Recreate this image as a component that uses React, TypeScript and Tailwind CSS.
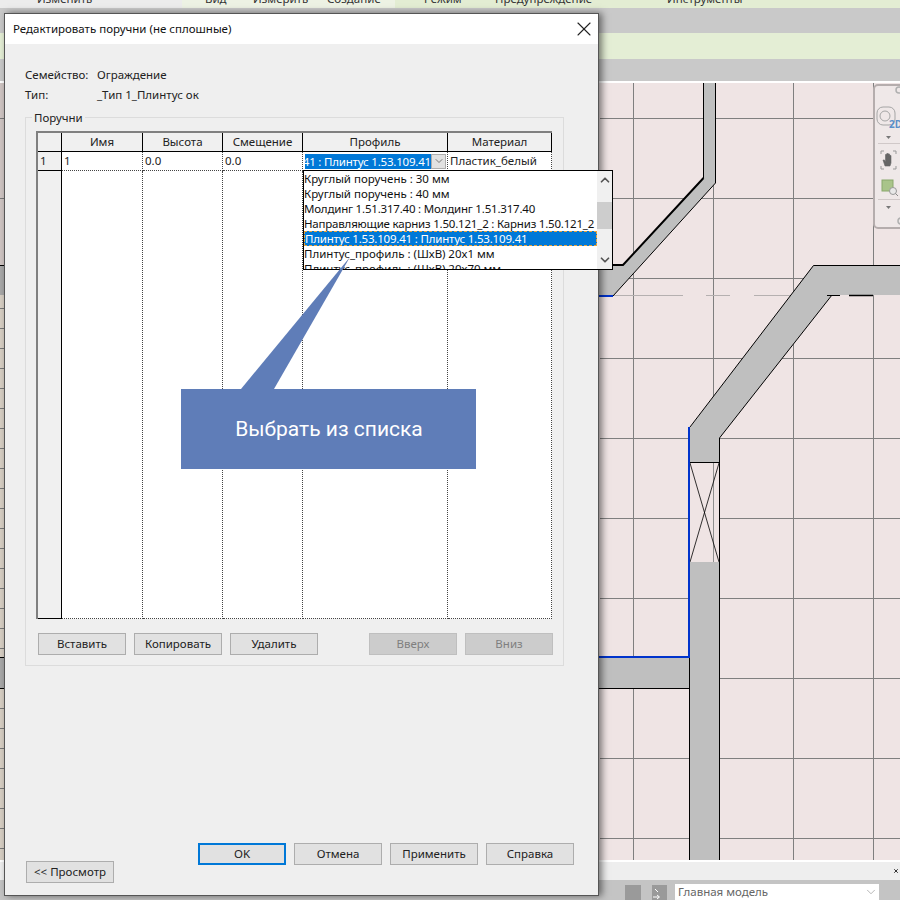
import React from 'react';
import { X, ChevronDown, ChevronUp } from 'lucide-react';

const ribbonTabs = [
  { label: 'Изменить', left: 37 },
  { label: 'Вид', left: 205 },
  { label: 'Измерить', left: 253 },
  { label: 'Создание', left: 327 },
  { label: 'Режим', left: 424 },
  { label: 'Предупреждение', left: 495 },
  { label: 'Инструменты', left: 667 },
];

const profiles = [
  { name: 'Круглый поручень : 30 мм' },
  { name: 'Круглый поручень : 40 мм' },
  { name: 'Молдинг 1.51.317.40 : Молдинг 1.51.317.40', tight: true },
  { name: 'Направляющие карниз 1.50.121_2 : Карниз 1.50.121_2', tight: true },
  { name: 'Плинтус 1.53.109.41 : Плинтус 1.53.109.41', tight: true, selected: true },
  { name: 'Плинтус_профиль : (ШхВ) 20х1 мм' },
  { name: 'Плинтус_профиль : (ШхВ) 20х70 мм' },
];

const columns = ['Имя', 'Высота', 'Смещение', 'Профиль', 'Материал'];

const DialogButton: React.FC<{ label: string; disabled?: boolean; primary?: boolean }> = ({ label, disabled, primary }) => (
  <div
    className={`w-[88px] h-[22px] flex items-center justify-center border ${
      primary
        ? 'bg-[#e1e1e1] border-2 border-[#0078d7] text-[#222]'
        : disabled
        ? 'bg-[#cccccc] border-[#bfbfbf] text-[#7f7f7f]'
        : 'bg-[#e1e1e1] border-[#adadad] text-[#222]'
    }`}
  >
    {label}
  </div>
);

// plan view behind the dialog, coordinates are page pixels
const PlanDrawing = () => {
  const vLines = [633, 713, 793, 873];
  const hLines = [118, 198, 278, 358, 438, 518, 598, 678, 758, 838];
  const stripLines = [118, 198, 308, 328, 348, 368, 388, 408, 428, 448, 468, 488, 508, 528, 548, 568, 588, 608, 628, 648, 708, 728, 748, 768, 788, 808, 828, 848];
  return (
    <svg className="block w-[900px] h-[777px]" viewBox="0 83 900 777">
      <rect x="0" y="83" width="4" height="182" fill="#cfc5c3" />
      <rect x="0" y="265" width="4" height="595" fill="#d7cfc4" />
      <rect x="0" y="265" width="4" height="30" fill="#a8a8a8" />
      <rect x="0" y="657" width="4" height="31" fill="#a8a8a8" />
      {stripLines.map((y) => (
        <line key={y} x1="0" x2="4" y1={y + 0.5} y2={y + 0.5} stroke="#777" />
      ))}
      <line x1="0" x2="4" y1="265.5" y2="265.5" stroke="#000" />
      <line x1="0" x2="4" y1="657.5" y2="657.5" stroke="#000" />
      <line x1="0" x2="4" y1="688.5" y2="688.5" stroke="#000" />

      {vLines.map((x) => (
        <line key={x} x1={x + 0.5} x2={x + 0.5} y1="83" y2="860" stroke="#7f7f7f" />
      ))}
      {hLines.map((y) => (
        <line key={y} x1="600" x2="900" y1={y + 0.5} y2={y + 0.5} stroke="#7f7f7f" />
      ))}

      <g stroke="#b5b0b0" strokeWidth="1">
        <line x1="613" x2="683" y1="295.5" y2="295.5" />
        <line x1="706" x2="730" y1="295.5" y2="295.5" />
        <line x1="754" x2="790" y1="295.5" y2="295.5" />
      </g>

      {/* upper wall */}
      <polygon points="703.5,83 715.5,83 715.5,183 613,296 596,296 596,265 623,265 703.5,178" fill="#bfbfbf" />
      <polyline points="715.5,83 715.5,183 613,296" fill="none" stroke="#000" />
      <line x1="703.5" x2="703.5" y1="83" y2="178" stroke="#000" />
      <polyline points="703.5,178 623,265 596,265" fill="none" stroke="#000" strokeWidth="2" />
      <line x1="596" x2="613" y1="296" y2="296" stroke="#0033cc" strokeWidth="2" />

      {/* right wall */}
      <polygon points="900,265 813.5,265 689.5,428 689.5,462 719.5,462 719.5,438 832,295 900,295" fill="#bfbfbf" />
      <polyline points="900,265.5 813.5,265.5 690,427" fill="none" stroke="#000" />
      <line x1="719.5" x2="832" y1="438" y2="295" stroke="#000" />
      <line x1="827" x2="840" y1="295.5" y2="295.5" stroke="#000" />
      <line x1="849" x2="873" y1="295.5" y2="295.5" stroke="#000" strokeWidth="1.5" />

      {/* door */}
      <rect x="690" y="462" width="29" height="100" fill="#efe4e4" />
      <line x1="713.5" x2="713.5" y1="462" y2="562" stroke="#8f8f8f" />
      <line x1="690" x2="719" y1="462.5" y2="462.5" stroke="#000" />
      <line x1="690" x2="719" y1="562.5" y2="562.5" stroke="#000" />
      <line x1="690" x2="719" y1="463" y2="562" stroke="#000" strokeWidth="0.8" />
      <line x1="719" x2="690" y1="463" y2="562" stroke="#000" strokeWidth="0.8" />

      {/* lower walls */}
      <rect x="690" y="562" width="29.5" height="298" fill="#bfbfbf" />
      <rect x="596" y="657" width="94" height="31" fill="#bfbfbf" />
      <line x1="719.5" x2="719.5" y1="438" y2="860" stroke="#000" />
      <line x1="689.5" x2="689.5" y1="562" y2="860" stroke="#000" />
      <line x1="596" x2="689" y1="688.5" y2="688.5" stroke="#000" />
      <polyline points="689,427 689,657 596,657" fill="none" stroke="#0033cc" strokeWidth="2" />
    </svg>
  );
};

const NavBar = () => (
  <div className="absolute left-[873px] top-[84px] w-[40px] h-[145px] rounded-[5px] border-2 border-[#b5adad] bg-[#efe8e8]">
    <svg className="absolute left-0 top-0" width="30" height="141" viewBox="0 0 30 141">
      <circle cx="24" cy="4" r="3" fill="none" stroke="#b0b0b0" strokeWidth="1.5" />
      <rect x="2" y="21" width="18" height="18" rx="6" fill="none" stroke="#a5a5a5" strokeWidth="1" />
      <circle cx="10" cy="30" r="5" fill="none" stroke="#a5a5a5" strokeWidth="1" />
      <polygon points="11,50 16,50 13.5,53" fill="#777" />
      <line x1="3" x2="30" y1="57.5" y2="57.5" stroke="#d0c8c8" />
      <path d="M6 68V65H9M18 65H21V68M21 80V83H18M9 83H6V80" fill="none" stroke="#999" />
      {/* hand */}
      <path d="M10 80L8 74H9.5L10.5 76V68.5H11.8V74V67.5H13.2V74V68H14.6V74V69.5H16V77L15 80Z" fill="#666" stroke="#666" strokeWidth="0.6" strokeLinejoin="round" />
      <rect x="7" y="94" width="11" height="11" fill="#a9c48a" stroke="#8aa86c" />
      <circle cx="18" cy="105" r="3.5" fill="#e8e8e8" stroke="#999" />
      <line x1="20.5" x2="23" y1="107.5" y2="110" stroke="#888" />
      <line x1="3" x2="30" y1="113.5" y2="113.5" stroke="#d0c8c8" />
      <polygon points="11,120 16,120 13.5,123" fill="#777" />
      <circle cx="26" cy="135" r="3" fill="none" stroke="#b0b0b0" strokeWidth="1.5" />
    </svg>
    <span className="absolute left-[14px] top-[33px] text-[10px] leading-none font-bold text-[#5b8fc9]">2D</span>
  </div>
);

const ProfileDropdown = () => (
  <div className="absolute left-[265px] top-[37px] w-[310px] h-[100px] z-10 overflow-hidden bg-white border border-black flex">
    <div className="w-[293px] overflow-hidden">
      {profiles.map((p) => (
        <div
          key={p.name}
          className={`h-[15px] leading-[15px] whitespace-nowrap ${p.tight ? 'tracking-[-0.2px]' : ''} ${
            p.selected ? 'bg-[#0078d7] text-white pl-[1px] outline-1 outline-dashed outline-offset-[-1px] outline-[#e8a33d]' : 'text-[#111]'
          }`}
        >
          {p.name}
        </div>
      ))}
    </div>
    <div className="flex-1 bg-[#f0f0f0] flex flex-col items-center pt-[2px]">
      <ChevronUp className="w-[14px] h-[14px] shrink-0 text-[#555]" strokeWidth={3} />
      <div className="w-full h-[27px] shrink-0 mt-[15px] bg-[#cdcdcd]" />
      <ChevronDown className="w-[14px] h-[14px] shrink-0 mt-[24px] text-[#555]" strokeWidth={3} />
    </div>
  </div>
);

const RailingTable = () => (
  <div className="relative w-[516px] h-[488px] flex flex-col bg-white border-t-2 border-l-2 border-[#808080]">
    <div className="grid grid-cols-[24px_81px_80px_80px_145px_104px] h-[19px] border-b border-black">
      <div className="bg-[#f0f0f0] border-r border-black" />
      {columns.map((c) => (
        <div key={c} className="bg-[#f0f0f0] border-r border-black flex items-center justify-center text-[#222]">
          {c}
        </div>
      ))}
    </div>
    <div className="grid grid-cols-[24px_81px_80px_80px_145px_104px] h-[19px]">
      <div className="bg-[#f0f0f0] border-r border-b border-black pl-[2px] leading-[18px] text-[#222]">1</div>
      <div className="border-r border-b border-dotted border-[#444] pl-[2px] leading-[18px] text-[#222]">1</div>
      <div className="border-r border-b border-dotted border-[#444] pl-[2px] leading-[18px] text-[#222]">0.0</div>
      <div className="border-r border-b border-dotted border-[#444] pl-[2px] leading-[18px] text-[#222]">0.0</div>
      <div className="border-r border-b border-dotted border-[#444] pl-[2px] flex items-center">
        <span className="w-[126px] h-[15px] bg-[#0078d7] text-white leading-[15px] whitespace-nowrap overflow-hidden flex justify-end tracking-[-0.2px]">
          <span className="shrink-0">41 : Плинтус 1.53.109.41</span>
        </span>
        <span className="w-[15px] h-[15px] bg-[#e1e1e1] border border-[#adadad] flex items-center justify-center">
          <ChevronDown className="w-[12px] h-[12px] text-[#555]" strokeWidth={1.5} />
        </span>
      </div>
      <div className="border-r border-b border-dotted border-[#444] pl-[2px] leading-[18px] text-[#222]">Пластик_белый</div>
    </div>
    <div className="flex-1 grid grid-cols-[24px_81px_80px_80px_145px_104px]">
      <div className="bg-[#f0f0f0] border-r border-b border-black" />
      {columns.map((c) => (
        <div key={c} className="border-r border-b border-dotted border-[#444]" />
      ))}
    </div>
    <ProfileDropdown />
  </div>
);

const Dialog = () => (
  <div className="absolute left-[4px] top-[13px] w-[595px] h-[883px] flex flex-col bg-[#efefef] border border-[#555] shadow-[3px_0_7px_rgba(0,0,0,0.5)] text-[11.5px] text-[#222] font-['Noto_Sans',sans-serif]">
    <div className="h-[30px] shrink-0 bg-white flex items-center justify-between pl-[8px] pr-[2px]">
      <span className="text-[#111]">Редактировать поручни (не сплошные)</span>
      <X className="w-[24px] h-[24px] text-[#222]" strokeWidth={1.1} />
    </div>
    <div className="flex-1 flex flex-col pl-[20px] pr-[34px] pb-[12px]">
      <div className="mt-[21px] flex h-[20px] items-center">
        <span className="w-[72px]">Семейство:</span>
        <span>Ограждение</span>
      </div>
      <div className="flex h-[20px] items-center">
        <span className="w-[72px]">Тип:</span>
        <span>_Тип 1_Плинтус ок</span>
      </div>
      <div className="relative mt-[12px] w-[539px] h-[549px] border border-[#dcdcdc] pl-[10px] pt-[13px]">
        <span className="absolute left-[6px] top-[-7px] bg-[#efefef] px-[2px] leading-[14px]">Поручни</span>
        <RailingTable />
        <div className="mt-[14px] ml-[2px] flex gap-[8px]">
          <DialogButton label="Вставить" />
          <DialogButton label="Копировать" />
          <DialogButton label="Удалить" />
          <div className="ml-[43px] flex gap-[8px]">
            <DialogButton label="Вверх" disabled />
            <DialogButton label="Вниз" disabled />
          </div>
        </div>
      </div>
      <div className="mt-auto flex items-end justify-between">
        <div className="ml-[1px]">
          <DialogButton label="<< Просмотр" />
        </div>
        <div className="flex gap-[8px] -mr-[10px] mb-[18px]">
          <DialogButton label="OK" primary />
          <DialogButton label="Отмена" />
          <DialogButton label="Применить" />
          <DialogButton label="Справка" />
        </div>
      </div>
    </div>
  </div>
);

const Callout = () => (
  <div className="absolute left-[181px] top-[389px] w-[295px] h-[80px] z-20 bg-[#5f7db8] flex items-center justify-center text-white text-[21px] font-['Roboto',sans-serif]">
    <svg className="absolute left-[60px] top-[-132px]" width="110" height="132" viewBox="0 0 110 132">
      <polygon points="0,132 33,132 109,0" fill="#5f7db8" />
    </svg>
    <span className="pl-[1px] pt-[2px]">Выбрать из списка</span>
  </div>
);

export default function App() {
  return (
    <div className="relative w-[900px] h-[900px] overflow-hidden flex flex-col bg-[#c9c9c9] font-['Noto_Sans',sans-serif]">
      <div className="relative h-[8px] shrink-0 overflow-hidden bg-[#e3edd3] text-[11.5px] text-[#333]">
        <div className="absolute left-0 top-0 h-full w-[182px] bg-[#ececec]" />
        <div className="absolute left-[182px] top-0 h-full w-[213px] bg-[#edf2e4]" />
        {ribbonTabs.map((t) => (
          <span key={t.label} className="absolute top-[-10px] leading-[18px] whitespace-nowrap" style={{ left: t.left }}>
            {t.label}
          </span>
        ))}
      </div>
      <div className="h-[25px] shrink-0 bg-[#c9c9c9]" />
      <div className="h-[26px] shrink-0 bg-[#e4eed5]" />
      <div className="h-[22px] shrink-0 bg-[#c9c9c9]" />
      <div className="h-[2px] shrink-0 bg-white" />
      <div className="h-[777px] shrink-0 bg-[#efe4e4]">
        <PlanDrawing />
      </div>
      <div className="h-[2px] shrink-0 bg-white" />
      <div className="h-[18px] shrink-0 bg-[#eeeeee] flex justify-end items-center pr-[1px]">
        <X className="w-[6px] h-[6px] text-[#333]" strokeWidth={4} />
      </div>
      <div className="flex-1 bg-[#c4c4c4] flex items-end pl-[625px] text-[11.5px]">
        <div className="w-[16px] h-[15px] bg-[#9a9a9a]" />
        <svg className="ml-[11px] w-[15px] h-[15px]" viewBox="0 0 15 15">
          <rect width="15" height="15" fill="#9a9a9a" />
          <path d="M1 12H7M5 10L7.5 12L5 14M3 4L6 7" fill="none" stroke="#fff" strokeWidth="1" />
        </svg>
        <div className="ml-[8px] w-[204px] h-[16px] bg-white flex items-center justify-between pl-[3px] pr-[1px] text-[#666]">
          <span>Главная модель</span>
          <ChevronDown className="w-[14px] h-[14px] text-[#999]" strokeWidth={1.2} />
        </div>
      </div>
      <NavBar />
      <Dialog />
      <Callout />
    </div>
  );
}
